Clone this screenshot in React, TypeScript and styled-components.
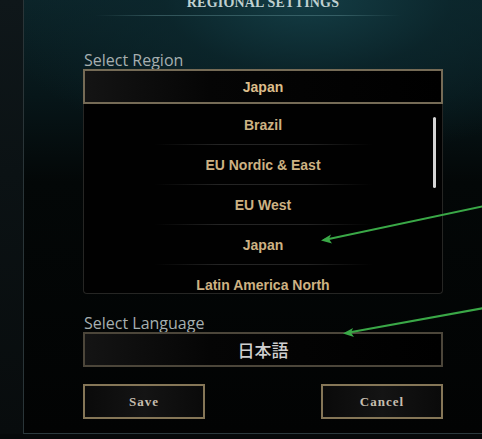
import React from "react";
import styled, { createGlobalStyle } from "styled-components";

const Global = createGlobalStyle`
  html, body { margin: 0; padding: 0; background: #070b0c; }
  body { width: 482px; height: 439px; overflow: hidden; }
  #root { width: 482px; height: 439px; }
`;

const Page = styled.div`
  position: relative;
  display: flex;
  width: 482px;
  height: 439px;
  background: #06090a;
  overflow: hidden;
`;

const Backdrop = styled.div`
  width: 23px;
  height: 434px;
  flex-shrink: 0;
  background: linear-gradient(180deg, #0f171a 0%, #0b1214 40%, #080c0d 100%);
`;

const Panel = styled.div`
  flex: 1;
  height: 434px;
  border-left: 1px solid #2a3538;
  border-bottom: 1px solid #2c3a3e;
  background:
    radial-gradient(ellipse 320px 160px at 62% 0%, rgba(20, 62, 70, 0.95) 0%, rgba(12, 40, 46, 0.7) 45%, rgba(0, 0, 0, 0) 100%),
    linear-gradient(180deg, #0b2328 0%, #071619 22%, #030707 42%, #020303 100%);
  display: flex;
  flex-direction: column;
  padding-left: 59px;
  box-sizing: border-box;
`;

const Content = styled.div`
  width: 360px;
  display: flex;
  flex-direction: column;
`;

const Title = styled.div`
  margin-top: -4px;
  height: 14px;
  line-height: 14px;
  text-align: center;
  font-family: "Liberation Serif", serif;
  font-weight: 700;
  font-size: 14px;
  letter-spacing: 0.2px;
  color: #bfd0d0;
  text-transform: uppercase;
`;

const TitleRule = styled.div`
  margin: 5px 42px 0 12px;
  height: 1px;
  background: linear-gradient(90deg, rgba(120, 170, 175, 0) 0%, rgba(120, 170, 175, 0.35) 20%, rgba(120, 170, 175, 0.35) 80%, rgba(120, 170, 175, 0) 100%);
`;

const Label = styled.div<{ $top: number }>`
  margin-top: ${(p) => p.$top}px;
  height: 18px;
  line-height: 18px;
  padding-left: 1px;
  font-family: "Open Sans", sans-serif;
  font-size: 16px;
  color: #a6afb0;
`;

const SelectBox = styled.div<{ $cjk?: boolean }>`
  height: 35px;
  box-sizing: border-box;
  border: 2px solid ${(p) => (p.$cjk ? "#4c463a" : "#756b56")};
  background: linear-gradient(90deg, #141414 0%, #050505 35%, #000 100%);
  display: flex;
  align-items: center;
  justify-content: center;
  font-family: ${(p) =>
    p.$cjk ? '"Noto Sans CJK JP", sans-serif' : '"Liberation Sans", sans-serif'};
  font-weight: ${(p) => (p.$cjk ? 500 : 700)};
  font-size: ${(p) => (p.$cjk ? 17 : 14)}px;
  color: ${(p) => (p.$cjk ? "#cfcfcf" : "#dcbd8a")};
`;

const List = styled.div`
  position: relative;
  height: 190px;
  box-sizing: border-box;
  padding-top: 1px;
  border: 1px solid #262624;
  border-top: none;
  border-radius: 0 0 4px 4px;
  background: #010101;
  overflow: hidden;
  display: flex;
  flex-direction: column;
`;

const Item = styled.div`
  flex-shrink: 0;
  height: 39px;
  display: flex;
  align-items: center;
  justify-content: center;
  font-family: "Liberation Sans", sans-serif;
  font-weight: 700;
  font-size: 14px;
  color: #cdb283;
`;

const Divider = styled.div`
  flex-shrink: 0;
  height: 1px;
  margin: 0 70px;
  background: linear-gradient(90deg, rgba(80, 80, 80, 0) 0%, rgba(80, 80, 80, 0.45) 30%, rgba(80, 80, 80, 0.45) 70%, rgba(80, 80, 80, 0) 100%);
`;

const Thumb = styled.div`
  position: absolute;
  right: 6px;
  top: 13px;
  width: 3px;
  height: 71px;
  border-radius: 2px;
  background: #d6d6d6;
`;

const Buttons = styled.div`
  margin-top: 17px;
  display: flex;
  justify-content: space-between;
`;

const Button = styled.div`
  width: 122px;
  height: 35px;
  box-sizing: border-box;
  border: 2px solid #857657;
  background: linear-gradient(90deg, #0a0a0a 0%, #141414 50%, #0a0a0a 100%);
  display: flex;
  align-items: center;
  justify-content: center;
  font-family: "Liberation Serif", serif;
  font-weight: 700;
  font-size: 13px;
  letter-spacing: 1px;
  color: #c6beaf;
`;

const Annotations = styled.svg`
  position: absolute;
  left: 0;
  top: 0;
  pointer-events: none;
`;

const regions = ["Brazil", "EU Nordic & East", "EU West", "Japan", "Latin America North"];

export default function App() {
  return (
    <>
      <Global />
      <Page>
        <Backdrop />
        <Panel>
          <Content>
            <Title>Regional Settings</Title>
            <TitleRule />
            <Label $top={35}>Select Region</Label>
            <SelectBox>Japan</SelectBox>
            <List>
              {regions.map((r, i) => (
                <React.Fragment key={r}>
                  {i > 0 && <Divider />}
                  <Item>{r}</Item>
                </React.Fragment>
              ))}
              <Thumb />
            </List>
            <Label $top={20}>Select Language</Label>
            <SelectBox $cjk>日本語</SelectBox>
            <Buttons>
              <Button>Save</Button>
              <Button>Cancel</Button>
            </Buttons>
          </Content>
        </Panel>
        <Annotations width={482} height={439} viewBox="0 0 482 439">
          <g stroke="#3aa847" strokeWidth={2} fill="none" strokeLinecap="round">
            <line x1={484} y1={206} x2={324} y2={240} />
            <line x1={484} y1={308} x2={346} y2={333} />
          </g>
          <g fill="#3aa847">
            <polygon points="321,240.5 331,234.5 329,239 332,243.5" />
            <polygon points="343,333.5 353,328 351,332.5 354,337" />
          </g>
        </Annotations>
      </Page>
    </>
  );
}
